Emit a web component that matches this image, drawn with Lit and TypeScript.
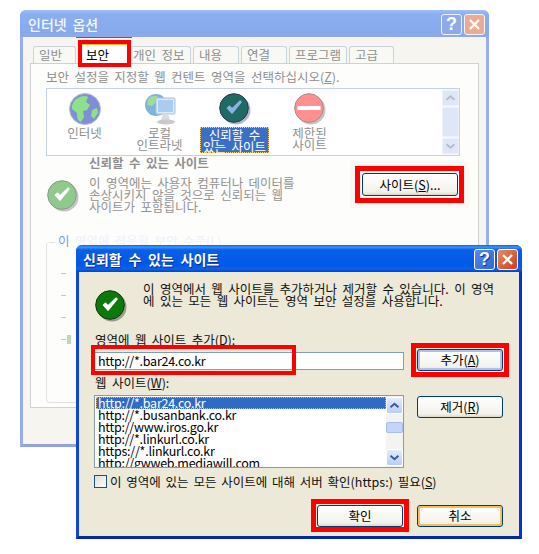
import { LitElement, html, css, svg } from "lit";
import { customElement } from "lit/decorators.js";

const check = (bg: string, edge: string, mark: string, shadow: string) => html`<svg class="round" viewBox="0 0 34 34" width="34" height="34">
  <circle cx="18" cy="18" r="14.5" fill="${shadow}"/>
  <circle cx="16" cy="16" r="14.3" fill="${bg}" stroke="${edge}" stroke-width="1"/>
  <path d="M9.5 16l4.5 5L23 10l-1-.8-8 7.8-2.5-2.6z" fill="${mark}" stroke="${mark}" stroke-width="1.6" stroke-linejoin="round"/>
</svg>`;

const caption = (kind: string) => html`<div class="caps ${kind}">
  <span class="cap q">?</span>
  <span class="cap x"><svg viewBox="0 0 21 21" width="21" height="21"><path d="M5.5 5.5l10 10M15.5 5.5l-10 10" stroke="#fff" stroke-width="2.6" fill="none"/></svg></span>
</div>`;

const arrow = (up: boolean, col: string) => svg`<path d="${up ? "M4 10l4.5-4 4.5 4" : "M4 6l4.5 4 4.5-4"}" fill="none" stroke="${col}" stroke-width="2.2"/>`;

@customElement("app-root")
export class AppRoot extends LitElement {
  static styles = css`
    :host { display: block; position: relative; width: 539px; height: 554px; background: #fff; overflow: hidden;
      font-family: "Noto Sans CJK KR", "Liberation Sans", sans-serif; font-size: 12.5px; line-height: 12px; word-spacing: 2.6px; }
    .win { position: absolute; box-sizing: border-box; display: flex; flex-direction: column; }
    .back { left: 20px; top: 10px; width: 469px; height: 437px; background: #f6f5ef; color: #8f8f8f;
      border: solid #95aef0; border-width: 0 3px 3px 3px; border-radius: 6px 6px 0 0; border-bottom-color: #94a3e0; }
    .front { left: 76px; top: 245px; width: 446px; height: 294px; background: #ece9d8; color: #111;
      border: solid #0c47d8; border-width: 0 3px 3px 3px; border-radius: 6px 6px 0 0; border-bottom-color: #0227a8; border-right-color: #0831d9; }
    .title { height: 27px; margin: 0 -3px; padding: 0 4px 0 7px; flex: none; display: flex; align-items: center; justify-content: space-between;
      border-radius: 6px 6px 0 0; color: #fff; font-weight: 700; font-size: 14px; word-spacing: 3.6px; }
    .back .title { padding-left: 8px; background: linear-gradient(#9fc0f8 0, #8aaeef 4px, #86aaec 22px, #8fa9ea 27px); color: #f4f7ff; font-weight: 500; word-spacing: 2.6px; }
    .front .title { background: linear-gradient(#0a5de0 0, #3b95ff 2px, #0a5fe6 5px, #0058e6 20px, #0a62ee 24px, #0044c8 27px); text-shadow: 1px 1px #0a2f9a; }
    .caps { display: flex; gap: 2px; margin-top: 1px; }
    .cap { box-sizing: border-box; width: 21px; height: 21px; border: 1px solid #fff; border-radius: 3px; display: flex; align-items: center; justify-content: center;
      font: 700 18px "Liberation Sans", sans-serif; color: #fff; word-spacing: 0; }
    .q { background: linear-gradient(135deg, #5a86ea, #3266d8); }
    .x { background: linear-gradient(135deg, #e88a66, #c8401c); }
    .caps.pale .q { background: #8ea9ec; border-color: #eef3ff; }
    .caps.pale .x { background: #ecaa93; border-color: #f4f4f4; }

    .tabs { display: flex; align-items: flex-end; height: 26px; padding: 0 0 0 10px; flex: none; }
    .tab { box-sizing: border-box; height: 17px; border: 1px solid #c8d5da; border-bottom: 0; border-radius: 3px 3px 0 0; background: #f8f8f4;
      padding: 2px 0 0 5px; margin-right: 2px; white-space: nowrap; }
    .tab.on { height: 21px; background: #fff; border-color: #fff; margin: 0; padding: 4px 0 0 7px; color: #000; border-top: 3px solid #f5b73f; }
    .t1 { width: 43px; } .t2 { width: 53px; } .t3 { width: 60px; padding-left: 2px; border-left: 0; } .t4 { width: 46px; } .t5 { width: 46px; } .t6 { width: 58px; } .t7 { width: 45px; }
    .panel { margin: 0 7px; height: 345px; flex: none; box-sizing: border-box; background: #fdfdfc; border: 1px solid #d2d1cb; padding: 7px 0 0 15px; }
    .prompt { height: 17px; white-space: nowrap; }
    .zones { box-sizing: border-box; width: 414px; height: 68px; background: #fff; border: 1px solid #c3d2de; display: flex; justify-content: space-between; }
    .zlist { display: flex; padding: 3px 0 0 0; }
    .zone { width: 75px; display: flex; flex-direction: column; align-items: center; text-align: center; white-space: nowrap; }
    .zone .ic { height: 34px; margin-bottom: 1px; }
    .sel { display: block; box-sizing: border-box; width: 69px; height: 26px; background: #3a6fc8; color: #fff; outline: 1px dotted #ffd27a; outline-offset: -1px; padding-top: 2px; }
    .bar { width: 17px; display: flex; flex-direction: column; justify-content: space-between; padding: 1px 0; box-sizing: border-box; background: #f7f8fb; }
    .zbar .btn, .zbar .thumb { background: #dfe6f8; border: 1px solid #ecf0fb; }
    .btn { width: 17px; height: 16px; box-sizing: border-box; border-radius: 2px; display: block; }
    .thumb { width: 17px; box-sizing: border-box; border-radius: 2px; flex: 1; margin: 1px 0; }
    .info { display: grid; grid-template-columns: 43px 1fr; }
    .info b { grid-column: 2; height: 16px; font-weight: 700; padding-top: 1px; box-sizing: border-box; }
    .info .ico { padding-top: 7px; }
    .info .txt { padding-top: 5px; white-space: nowrap; color: #939393; }
    .group { position: relative; box-sizing: border-box; width: 414px; height: 161px; margin-top: 28px; border: solid #e4e3dd; border-width: 0 0 1px 1px; border-radius: 4px; padding: 31px 0 0 14px; }
    .group::before { content: ""; position: absolute; left: 2px; top: 0; width: 6px; height: 1px; background: #e4e3dd; }
    .glabel { position: absolute; left: 9px; top: -7px; color: #eef1f8; padding: 0 2px; white-space: nowrap; }
    .glabel em { font-style: normal; color: #7aa0e8; }
    .ticks { display: flex; flex-direction: column; gap: 17px; }
    .ticks i { display: block; width: 5px; height: 4px; border-top: 1px solid #c8c8c0; }
    .ticks i.th { position: relative; }
    .ticks i.th::after { content: ""; position: absolute; left: 6px; top: -5px; width: 4px; height: 9px; background: #b6dcb0; }

    .fbody { padding: 11px 0 0 15px; display: flex; flex-direction: column; flex: 1; }
    .intro { display: flex; height: 50px; flex: none; }
    .intro .ico { width: 49px; padding-top: 6px; box-sizing: border-box; }
    .intro p { margin: 0; white-space: nowrap; }
    .lb { height: 16px; padding: 1px 0 0 1px; box-sizing: border-box; white-space: nowrap; flex: none; }
    .row { display: grid; grid-template-columns: 310px 86px; column-gap: 13px; flex: none; align-items: start; }
    .latin { letter-spacing: -0.25px; }
    .inp { box-sizing: border-box; height: 18px; margin-top: 3px; background: #fff; border: 1px solid #7f9db9; padding: 2px 0 0 3px; color: #000; }
    .xpb { box-sizing: border-box; width: 86px; height: 22px; padding: 0; font: inherit; word-spacing: inherit; border: 1px solid #003c74; border-radius: 3px; background: linear-gradient(#fff, #f3f2ea 85%, #dcd8c8);
      display: flex; align-items: center; justify-content: center; color: #000; }
    .xpb.def { box-shadow: inset 0 0 0 2px #a9c3ea; }
    .xpb.hot { box-shadow: inset 0 0 0 2px #f5c05c; }
    .xpb.low { margin-top: 1px; }
    .mid { height: 24px; flex: none; padding: 6px 0 0 1px; box-sizing: border-box; white-space: nowrap; }
    .list { box-sizing: border-box; height: 73px; background: #fff; border: 1px solid #7f9db9; display: flex; overflow: hidden; }
    .items { flex: 1; padding: 1px 0 0 1px; min-width: 0; }
    .items div { height: 12px; padding-left: 2px; white-space: nowrap; color: #000; }
    .items .s { background: #316ac5; color: #fff; outline: 1px dotted #e8b060; outline-offset: -1px; }
    .lbar { background: #f3f3ef; }
    .lbar .btn { background: linear-gradient(#e4ecfd, #b9cdf6); border: 1px solid #fff; height: 17px; }
    .lbar .thumb { flex: none; height: 11px; margin: 8px 0 auto; background: #c5d5f7; border: 1px solid #a8bde8; }
    .chk { display: flex; align-items: center; gap: 3px; margin-top: 7px; height: 13px; flex: none; white-space: nowrap; word-spacing: 2px; }
    .box { box-sizing: border-box; width: 13px; height: 13px; border: 1px solid #1c5180; background: linear-gradient(135deg, #dcdcd7, #fff); flex: none; }
    .foot { display: flex; justify-content: flex-end; gap: 14px; margin-top: 17px; padding-right: 16px; }
    u { text-underline-offset: 1px; }

    .red { position: absolute; box-sizing: border-box; border: 4px solid #ff0000; pointer-events: none; }
    .r1 { left: 78px; top: 40px; width: 53px; height: 27px; }
    .r1::before { content: ""; position: absolute; left: -6px; top: -7px; width: 56px; height: 1px; background: #3f5fb8; }
    .r2 { left: 355px; top: 166px; width: 109px; height: 37px; border-width: 5px; box-shadow: 0 0 0 5px #f8f8f5; }
    .r3 { left: 91px; top: 345px; width: 205px; height: 30px; }
    .r4 { left: 411px; top: 343px; width: 98px; height: 34px; border-width: 5px; }
    .r5 { left: 311px; top: 499px; width: 98px; height: 33px; border-width: 5px; }
    .sitebtn { position: absolute; left: 362px; top: 173px; width: 96px; height: 23px; }
  `;

  render() {
    return html`
      <section class="win back">
        <div class="title"><span>인터넷 옵션</span>${caption("pale")}</div>
        <div class="tabs">
          <span class="tab t1">일반</span><span class="tab on t2">보안</span><span class="tab t3">개인 정보</span><span class="tab t4">내용</span><span class="tab t5">연결</span><span class="tab t6">프로그램</span><span class="tab t7">고급</span>
        </div>
        <div class="panel">
          <div class="prompt">보안 설정을 지정할 웹 컨텐트 영역을 선택하십시오(<u>Z</u>).</div>
          <div class="zones">
            <div class="zlist">
              <div class="zone"><div class="ic"><svg viewBox="0 0 34 34" width="34" height="34"><circle cx="17" cy="17" r="15.5" fill="#7e8fd8" stroke="#b9c0c8"/><path d="M7 8c5-4 10-5 13-3l-2 5 4 3-3 5-4 1 1 6-3 5c-4-1-4-6-4-9l-5-4c-1-3 1-6 3-9z" fill="#8fe08a"/><path d="M24 18l5-2 1 5-4 6-3-3z" fill="#8fe08a"/></svg></div>인터넷</div>
              <div class="zone"><div class="ic"><svg viewBox="0 0 34 34" width="34" height="34"><circle cx="13" cy="13" r="11" fill="#7fb4d8"/><path d="M5 7c4-4 8-4 10-2l-2 5-4 4-5-1z" fill="#9fdc9a"/><rect x="13" y="6" width="19" height="16" rx="1" fill="#dbe9f8" stroke="#a8c0dc"/><rect x="15" y="8" width="15" height="12" fill="#a9cdf2"/><path d="M20 22h5l2 6h-9z" fill="#d8dadf"/><ellipse cx="23" cy="30" rx="9" ry="2.5" fill="#c9c9cb"/></svg></div>로컬<br />인트라넷</div>
              <div class="zone"><div class="ic">${check("#1f6b64", "#28354f", "#8fb2e2", "#b3b8c8")}</div><span class="sel">신뢰할 수<br />있는 사이트</span></div>
              <div class="zone"><div class="ic"><svg viewBox="0 0 34 34" width="34" height="34"><circle cx="18" cy="18" r="14.5" fill="#c4c4c4"/><circle cx="16" cy="16" r="14.3" fill="#ff8f90" stroke="#a88"/><rect x="4.5" y="14" width="23" height="4" fill="#fff"/></svg></div>제한된<br />사이트</div>
            </div>
            <div class="bar zbar"><svg class="btn" viewBox="0 0 17 16">${arrow(true, "#b4bdcc")}</svg><span class="thumb"></span><svg class="btn" viewBox="0 0 17 16">${arrow(false, "#b4bdcc")}</svg></div>
          </div>
          <div class="info">
            <span></span><b>신뢰할 수 있는 사이트</b>
            <div class="ico">${check("#8fc98c", "#8a9a8a", "#fff", "#c4c4c4")}</div>
            <div class="txt">이 영역에는 사용자 컴퓨터나 데이터를<br />손상시키지 않을 것으로 신뢰되는 웹<br />사이트가 포함됩니다.</div>
          </div>
          <div class="group">
            <span class="glabel"><em>이</em> 영역에 적용할 보안 수준(L)</span>
            <div class="ticks"><i></i><i></i><i></i><i class="th"></i></div>
          </div>
        </div>
      </section>

      <button class="xpb sitebtn">사이트(<u>S</u>)...</button>

      <section class="win front">
        <div class="title"><span>신뢰할 수 있는 사이트</span>${caption("vivid")}</div>
        <div class="fbody">
          <div class="intro">
            <div class="ico">${check("#0b7a0b", "#17331a", "#fff", "#9a9a90")}</div>
            <p>이 영역에서 웹 사이트를 추가하거나 제거할 수 있습니다. 이 영역<br />에 있는 모든 웹 사이트는 영역 보안 설정을 사용합니다.</p>
          </div>
          <div class="lb">영역에 웹 사이트 추가(<u>D</u>):</div>
          <div class="row">
            <div class="inp latin">http://*.bar24.co.kr</div>
            <button class="xpb def">추가(<u>A</u>)</button>
          </div>
          <div class="mid">웹 사이트(<u>W</u>):</div>
          <div class="row">
            <div class="list">
              <div class="items latin">
                <div class="s">http://*.bar24.co.kr</div>
                <div>http://*.busanbank.co.kr</div>
                <div>http://www.iros.go.kr</div>
                <div>http://*.linkurl.co.kr</div>
                <div>https://*.linkurl.co.kr</div>
                <div>http://gwweb.mediawill.com</div>
              </div>
              <div class="bar lbar"><svg class="btn" viewBox="0 0 17 16">${arrow(true, "#3d5a98")}</svg><span class="thumb"></span><svg class="btn" viewBox="0 0 17 16">${arrow(false, "#3d5a98")}</svg></div>
            </div>
            <button class="xpb low">제거(<u>R</u>)</button>
          </div>
          <div class="chk"><span class="box"></span><span>이 영역에 있는 모든 사이트에 대해 서버 확인(https:) 필요(<u>S</u>)</span></div>
          <div class="foot">
            <button class="xpb">확인</button>
            <button class="xpb hot">취소</button>
          </div>
        </div>
      </section>

      <div class="red r1"></div>
      <div class="red r2"></div>
      <div class="red r3"></div>
      <div class="red r4"></div>
      <div class="red r5"></div>
    `;
  }
}
